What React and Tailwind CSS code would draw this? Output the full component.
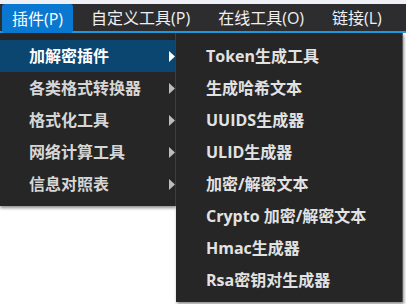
import React from 'react';

const font = { fontFamily: '"Open Sans", "Noto Sans CJK SC", sans-serif' };

const topItems = ['插件(P)', '自定义工具(P)', '在线工具(O)', '链接(L)'];
const mainItems = ['加解密插件', '各类格式转换器', '格式化工具', '网络计算工具', '信息对照表'];
const subItems = [
  'Token生成工具',
  '生成哈希文本',
  'UUIDS生成器',
  'ULID生成器',
  '加密/解密文本',
  'Crypto 加密/解密文本',
  'Hmac生成器',
  'Rsa密钥对生成器',
];

const Arrow = ({ active }) => (
  <svg width="6" height="11" viewBox="0 0 6 11" className="shrink-0">
    <path d="M0 0 L6 5.5 L0 11 Z" fill={active ? '#ffffff' : '#bdbdbd'} />
  </svg>
);

const App = () => {
  return (
    <div className="w-[406px] h-[304px] bg-white overflow-hidden" style={font}>
      <div className="h-[4px] bg-[#eef0f5]" />
      <div className="h-[27px] bg-[#2d2d30] flex items-stretch pl-[2px] text-[16px] text-[#f0f0f0]">
        {topItems.map((t, i) => (
          <div
            key={t}
            className={
              i === 0
                ? 'flex items-center px-[10px] h-[29px] rounded-[3px] bg-[#0a78d0] text-white'
                : 'flex items-center px-[10px] ml-[8px]'
            }
          >
            {t}
          </div>
        ))}
      </div>
      <div className="h-[2px] bg-[#1e9be0]" />
      <div className="flex items-start">
        <div className="w-[176px] bg-[#262626] border-r border-[#444448] pt-[7px] pb-[6px] shadow-[0_2px_3px_rgba(0,0,0,0.45)]">
          {mainItems.map((t, i) => (
            <div
              key={t}
              className={
                'h-[32px] flex items-center justify-between pl-[29px] font-bold text-[16px] ' +
                (i === 0 ? 'bg-[#0b4670] text-white' : 'text-[#d6d6d6]')
              }
            >
              <span>{t}</span>
              <Arrow active={i === 0} />
            </div>
          ))}
        </div>
        <div className="w-[227px] bg-[#262626] border-r border-[#5a5a5e] pt-[7px] pb-[6px] shadow-[1px_2px_3px_rgba(0,0,0,0.45)]">
          {subItems.map((t) => (
            <div key={t} className="h-[32px] flex items-center pl-[30px] font-bold text-[16px] text-[#e2e2e2]">
              {t}
            </div>
          ))}
        </div>
      </div>
    </div>
  );
};

export default App;
